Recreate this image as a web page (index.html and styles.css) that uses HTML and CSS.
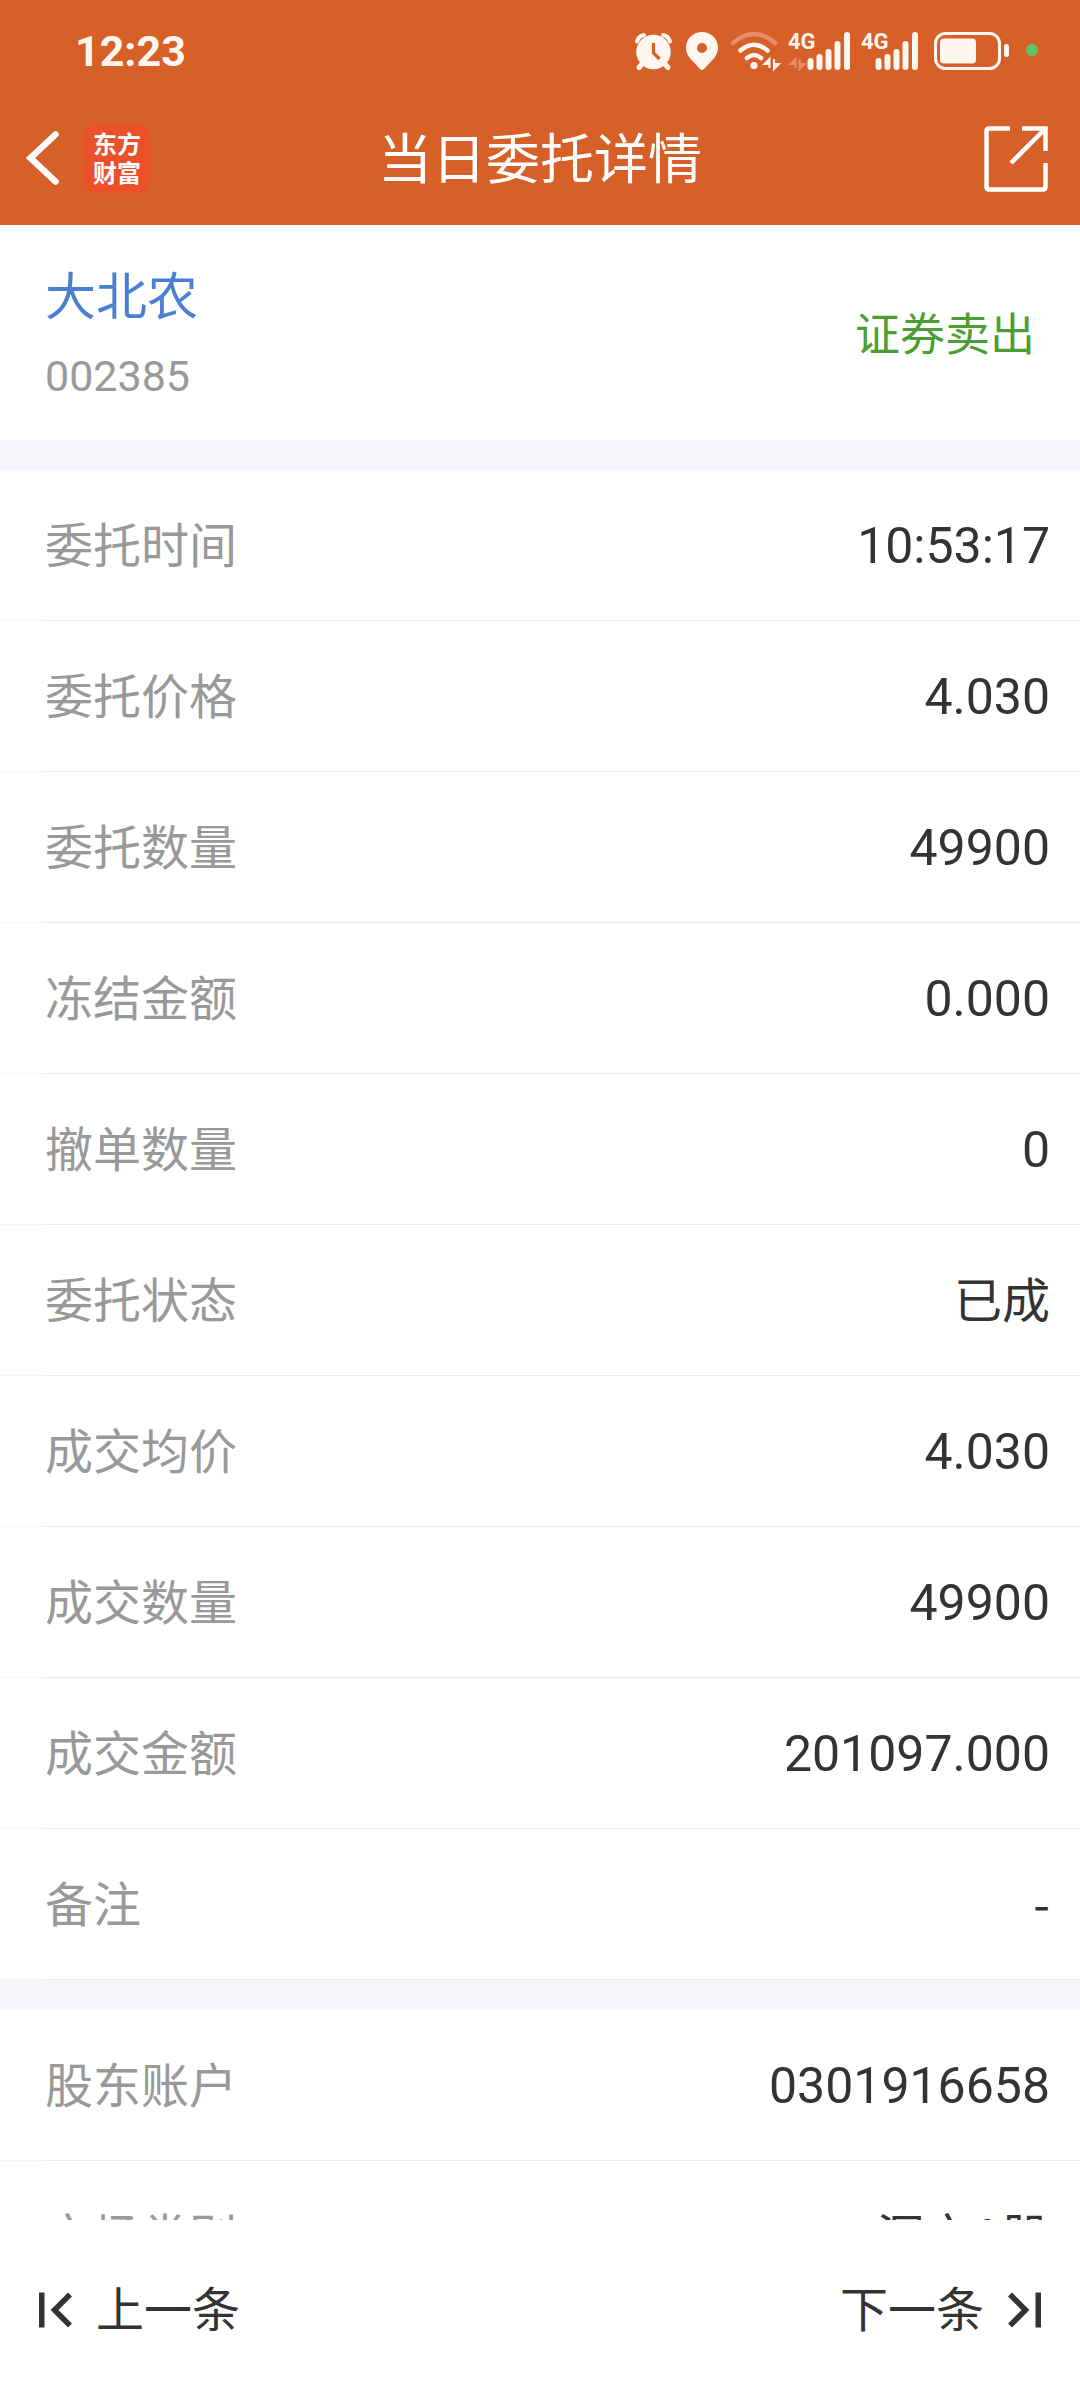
FILE: index.html
```html
<!DOCTYPE html>
<html lang="zh-CN">
<head>
    <meta charset="UTF-8">
    <meta name="viewport" content="width=device-width, initial-scale=1.0">
    <title>当日委托详情</title>
    <link rel="stylesheet" href="styles.css">
</head>
<body>

    <header class="header">
        <!-- 状态栏 -->
        <div class="status">
            <span class="clock">12:23</span>
            <div class="status-icons">
                <svg width="39" height="38" viewBox="0 0 39 38" fill="none" stroke="#fff6f0">
                    <circle cx="18.5" cy="20" r="17.3" fill="#fff6f0" stroke="none"/>
                    <path d="M2 9.500Q3.500 4 9 3M35 9.500Q33.500 4 28 3" stroke-width="4" stroke-linecap="round"/>
                    <path d="M7 32l-3 3.500M30 32l3 3.500" stroke-width="5" stroke-linecap="round"/>
                    <path d="M18.500 11v10l6 6" stroke="#d75f28" stroke-width="3.200"/>
                </svg>
                <svg width="37" height="38" viewBox="0 0 37 38">
                    <path fill="#fff6f0" fill-rule="evenodd" d="M18 0C9 0 2 7 2 15.500c0 6 3 10 7 14l7 7.500q2 2 4 0l7-7.500c4-4 7-8 7-14C34 7 27 0 18 0zM18 11a5 5 0 1 1 0 10a5 5 0 1 1 0-10z"/>
                </svg>
                <svg width="48" height="38" viewBox="0 0 48 38" fill="none" stroke="#fff6f0" stroke-linecap="round" stroke-width="4.500">
                    <path d="M2 11Q23-7 44 11" stroke="#e98d68"/>
                    <path d="M9.500 18.500Q23 7 36.500 18.500"/>
                    <path d="M16 26Q23 20 30 26"/>
                    <circle cx="23" cy="33.5" r="3.600" fill="#fff6f0" stroke="none"/>
                    <path d="M38.500 36V27l-5 5h5zM43 27v10l5-5h-5z" fill="#fff6f0" stroke-width="2"/>
                </svg>
                <svg width="63" height="38" viewBox="0 0 63 38">
                    <text x="-1" y="17" class="net">4G</text>
                    <path d="M6.500 36V27l-5 5h5zM10.500 27v10l5-5h-5z" fill="#e98d68" stroke="#e98d68" stroke-width="2"/>
                    <path d="M21.500 29v6M30.500 25v10M39.500 20v15M48.500 12v23M58 3v32" stroke="#fff6f0" stroke-width="6" stroke-linecap="round"/>
                </svg>
                <svg width="60" height="38" viewBox="0 0 60 38">
                    <text x="-1" y="17" class="net">4G</text>
                    <path d="M16.500 29v6M25.500 25v10M34.500 20v15M43.500 12v23M53 3v32" stroke="#fff6f0" stroke-width="6" stroke-linecap="round"/>
                </svg>
                <svg width="82" height="38" viewBox="0 0 82 38">
                    <rect x="3.500" y="1.500" width="64" height="35" rx="10" fill="none" stroke="#fff6f0" stroke-width="3"/>
                    <rect x="8" y="6.500" width="36" height="25" rx="4" fill="#fff6f0"/>
                    <rect x="72" y="12" width="5" height="13" rx="2.500" fill="#fff6f0"/>
                </svg>
                <svg width="14" height="38" viewBox="0 0 14 38">
                    <circle cx="8" cy="18" r="6" fill="#5bc466"/>
                </svg>
            </div>
        </div>

        <!-- 标题栏 -->
        <div class="navbar">
            <div class="nav-left">
                <button class="icon-btn" aria-label="返回">
                    <svg width="32" height="54" viewBox="0 0 32 54" fill="none" stroke="#fff" stroke-width="6.500" stroke-linecap="round">
                        <path d="M28.500 2.500L3.500 26l25 23.500"/>
                    </svg>
                </button>
                <span class="logo">东方<br>财富</span>
            </div>
            <h1 class="title">当日委托详情</h1>
            <button class="icon-btn share" aria-label="分享">
                <svg width="64" height="66" viewBox="0 0 64 66" fill="none" stroke="#fff" stroke-width="4.500">
                    <path d="M26 2.500H5Q2.500 2.500 2.500 5v56q0 2.500 2.500 2.500h54q2.500 0 2.500-2.500V37"/>
                    <path d="M38 2.500h23.500V25M61 3L27 37"/>
                </svg>
            </button>
        </div>
    </header>

    <main class="content">
        <section class="summary">
            <div>
                <a href="#" class="stock-name">大北农</a>
                <p class="stock-code">002385</p>
            </div>
            <span class="side">证券卖出</span>
        </section>

        <dl class="list">
            <div class="row"><dt>委托时间</dt><dd>10:53:17</dd></div>
            <div class="row"><dt>委托价格</dt><dd>4.030</dd></div>
            <div class="row"><dt>委托数量</dt><dd>49900</dd></div>
            <div class="row"><dt>冻结金额</dt><dd>0.000</dd></div>
            <div class="row"><dt>撤单数量</dt><dd>0</dd></div>
            <div class="row"><dt>委托状态</dt><dd class="text">已成</dd></div>
            <div class="row"><dt>成交均价</dt><dd>4.030</dd></div>
            <div class="row"><dt>成交数量</dt><dd>49900</dd></div>
            <div class="row"><dt>成交金额</dt><dd>201097.000</dd></div>
            <div class="row"><dt>备注</dt><dd class="text">-</dd></div>
        </dl>

        <dl class="list">
            <div class="row"><dt>股东账户</dt><dd>0301916658</dd></div>
            <div class="row"><dt>市场类别</dt><dd class="text">深市A股</dd></div>
        </dl>
    </main>

    <!-- 底部翻页 -->
    <footer class="pager">
        <button class="pager-btn">
            <svg width="33" height="36" viewBox="0 0 33 36" fill="none" stroke="#333" stroke-width="5.500">
                <path d="M2.750 .5v35M31 2.500L15.500 18 31 33.500"/>
            </svg>
            <span>上一条</span>
        </button>
        <button class="pager-btn">
            <span>下一条</span>
            <svg width="33" height="36" viewBox="0 0 33 36" fill="none" stroke="#333" stroke-width="5.500">
                <path d="M30.250 .5v35M2 2.500L17.500 18 2 33.500"/>
            </svg>
        </button>
    </footer>

</body>
</html>
```
FILE: styles.css
```css
* {
    box-sizing: border-box;
    margin: 0;
    padding: 0;
}
body {
    display: flex;
    flex-direction: column;
    height: 100vh;
    background-color: #fff;
    color: #333;
    font-family: "Noto Sans CJK SC", sans-serif;
    font-size: 48px;
}
button {
    border: none;
    background: none;
    color: inherit;
    font: inherit;
    cursor: pointer;
}
svg {
    display: block;
    flex: none;
    overflow: visible;
}

/* 顶部 */
.header {
    flex: none;
    background-color: #d75f28;
    color: #fff;
}
.status {
    display: flex;
    justify-content: space-between;
    align-items: center;
    height: 92px;
    padding: 10px 42px 0 75px;
}
.clock {
    color: #fff6f0;
    font-family: Roboto, sans-serif;
    font-size: 43px;
    font-weight: 700;
    line-height: 52px;
}
.status-icons {
    display: flex;
    align-items: center;
    gap: 10px;
}
.net {
    fill: #fff6f0;
    font-family: Roboto, sans-serif;
    font-size: 22px;
    font-weight: 700;
}
.navbar {
    display: grid;
    grid-template-columns: 1fr auto 1fr;
    align-items: center;
    height: 133px;
    padding: 0 27px;
}
.nav-left {
    display: flex;
    align-items: center;
    gap: 24px;
}
.logo {
    width: 68px;
    height: 68px;
    padding-top: 3px;
    border-radius: 14px;
    background-color: #eb5129;
    font-size: 24px;
    font-weight: 700;
    line-height: 29px;
    text-align: center;
}
.title {
    padding-bottom: 6px;
    font-size: 54px;
    font-weight: 400;
    line-height: 80px;
}
.share {
    justify-self: end;
    margin-right: 5px;
}

/* 内容 */
.content {
    flex: 1;
    min-height: 0;
    overflow-y: auto;
    scrollbar-width: none;
}
.summary {
    display: flex;
    justify-content: space-between;
    align-items: center;
    padding: 32px 45px 34px;
}
.stock-name {
    display: block;
    color: #4b7fd3;
    font-size: 51px;
    line-height: 72px;
    text-decoration: none;
}
.stock-code {
    margin-top: 17px;
    color: #999;
    font-family: Roboto, sans-serif;
    font-size: 43px;
    line-height: 60px;
}
.side {
    color: #4b9e32;
    font-size: 45px;
}
.list {
    border-top: 30px solid #f6f7fa;
}
.row {
    display: flex;
    justify-content: space-between;
    align-items: center;
    height: 151px;
    padding: 0 30px 0 45px;
    background: linear-gradient(to right, #f7f7f7 45px, #ebebeb 45px) bottom / 100% 1px no-repeat;
}
.row dt {
    padding-bottom: 8px;
    color: #999;
}
.row dd {
    font-family: Roboto, sans-serif;
    font-size: 50px;
}
.row .text {
    padding-bottom: 8px;
    font-family: "Noto Sans CJK SC", sans-serif;
    font-size: 48px;
}

/* 底部 */
.pager {
    display: flex;
    flex: none;
    justify-content: space-between;
    align-items: center;
    height: 180px;
    padding: 0 39px;
    background-color: #fff;
}
.pager-btn {
    display: flex;
    align-items: center;
    gap: 24px;
}
.pager-btn span {
    padding-bottom: 8px;
}
```
